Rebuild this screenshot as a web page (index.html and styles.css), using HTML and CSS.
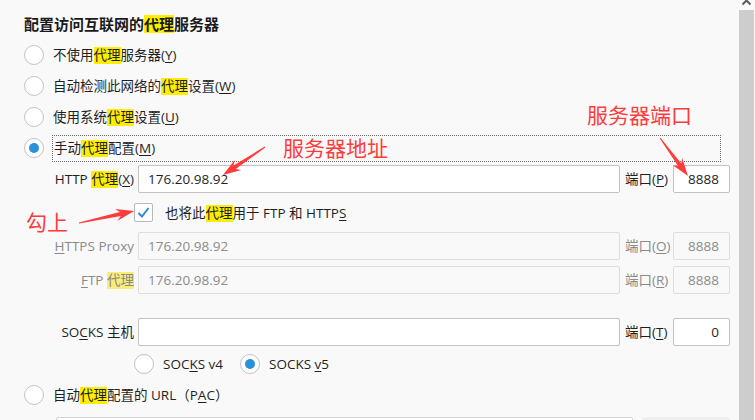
FILE: index.html
```html
<!DOCTYPE html>
<html lang="zh-CN">
<head>
<meta charset="utf-8">
<title>连接设置</title>
<link rel="stylesheet" href="styles.css">
</head>
<body>
<div class="window">
  <main class="panel">
    <h1 class="title">配置访问互联网的<span class="hl">代理</span>服务器</h1>

    <div class="opt"><span class="radio"></span><span class="opt-label">不使用<span class="hl">代理</span>服务器(<u>Y</u>)</span></div>
    <div class="opt"><span class="radio"></span><span class="opt-label">自动检测此网络的<span class="hl">代理</span>设置(<u>W</u>)</span></div>
    <div class="opt"><span class="radio"></span><span class="opt-label">使用系统<span class="hl">代理</span>设置(<u>U</u>)</span></div>
    <div class="opt opt-tall"><span class="radio checked"></span><span class="opt-label focus">手动<span class="hl">代理</span>配置(<u>M</u>)</span></div>

    <div class="field-row first">
      <span class="f-label">HTTP <span class="hl">代理</span>(<u>X</u>)</span>
      <span class="input">176.20.98.92</span>
      <span class="p-label">端口(<u>P</u>)</span>
      <span class="input port">8888</span>
    </div>

    <div class="check-row">
      <span class="checkbox"><svg width="17" height="17" viewBox="0 0 17 17"><polyline points="3.5,9 7,12.5 13.5,4" fill="none" stroke="#2b8ad6" stroke-width="2"/></svg></span>
      <span class="check-label">也将此<span class="hl">代理</span>用于 FTP 和 HTTP<u>S</u></span>
    </div>

    <div class="field-row disabled">
      <span class="f-label"><u>H</u>TTPS Proxy</span>
      <span class="input">176.20.98.92</span>
      <span class="p-label">端口(<u>O</u>)</span>
      <span class="input port">8888</span>
    </div>

    <div class="field-row disabled ftp">
      <span class="f-label"><u>F</u>TP <span class="hl">代理</span></span>
      <span class="input">176.20.98.92</span>
      <span class="p-label">端口(<u>R</u>)</span>
      <span class="input port">8888</span>
    </div>

    <div class="field-row socks">
      <span class="f-label">SO<u>C</u>KS 主机</span>
      <span class="input"></span>
      <span class="p-label">端口(<u>T</u>)</span>
      <span class="input port">0</span>
    </div>

    <div class="socks-row">
      <span class="sopt v4"><span class="radio"></span><span class="sopt-label">SOC<u>K</u>S v4</span></span>
      <span class="sopt"><span class="radio checked"></span><span class="sopt-label">SOCKS <u>v</u>5</span></span>
    </div>

    <div class="opt opt-pac"><span class="radio"></span><span class="opt-label">自动<span class="hl">代理</span>配置的 URL（P<u>A</u>C）</span></div>

    <div class="pac-row">
      <span class="input pac-input"></span>
      <span class="pac-btn"></span>
    </div>
  </main>

  <div class="scrollbar">
    <div class="sb-arrow"><svg width="16" height="10" viewBox="0 0 16 10"><polyline points="3.5,6.5 7.5,2.5 11.5,6.5" fill="none" stroke="#5a5a5a" stroke-width="2"/></svg></div>
    <div class="sb-thumb"></div>
  </div>

  <svg class="annot" width="755" height="420" viewBox="0 0 755 420">
    <polygon fill="#ff3b3b" points="265.3,147.4 235.7,169.0 241.3,170.0 223,175 234.7,160.0 233.5,165.6 264.7,146.6"/>
    <polygon fill="#ff3b3b" points="659.6,138.3 678.1,165.9 672.5,165.1 688,176 682.1,157.9 681.3,163.5 660.4,137.7"/>
    <polygon fill="#ff3b3b" points="79.1,223.5 120.7,216.0 117.7,220.7 134,211 115.1,208.9 119.9,212.0 78.9,222.5"/>
  </svg>
  <div class="note note-port">服务器端口</div>
  <div class="note note-addr">服务器地址</div>
  <div class="note note-check">勾上</div>
</div>
</body>
</html>
```
FILE: styles.css
```css
* { box-sizing: border-box; }

html, body {
  margin: 0;
  padding: 0;
  background: #f9f9f9;
}

body {
  font-family: "Open Sans", "Noto Sans CJK SC", sans-serif;
  font-size: 13.5px;
  color: #1f1f1f;
}

.window {
  position: relative;
  width: 755px;
  height: 420px;
  overflow: hidden;
  display: flex;
  background: #f9f9f9;
}

.panel {
  flex: 1;
  padding: 0 9px 0 24px;
  display: flex;
  flex-direction: column;
}

u {
  text-decoration: underline;
  text-underline-offset: 2px;
}

.hl {
  display: inline-block;
  background: #ffee00;
  line-height: 17px;
}

.title {
  margin: 15px 0 6px;
  font-size: 15px;
  font-weight: bold;
  line-height: 18px;
  color: #1a1a1a;
  font-family: "Noto Sans CJK SC", sans-serif;
}

.title .hl { line-height: 18px; }

.opt {
  height: 31px;
  display: flex;
  align-items: center;
  flex-shrink: 0;
}

.opt-tall { height: 32px; }

.opt-pac { height: 26px; }

.radio {
  width: 20px;
  height: 20px;
  border-radius: 50%;
  border: 1.5px solid #c3c3c3;
  background: #fff;
  flex-shrink: 0;
  margin-right: 9px;
  display: flex;
  align-items: center;
  justify-content: center;
}

.radio.checked::after {
  content: "";
  width: 10px;
  height: 10px;
  border-radius: 50%;
  background: #2a90d8;
}

.opt-label {
  line-height: 20px;
  white-space: nowrap;
}

.opt-label.focus {
  flex: 1;
  height: 27px;
  margin: 0 9px 0 -1px;
  padding: 0 1px;
  border: 1px dotted #6a6a6a;
  display: flex;
  align-items: center;
}

.field-row {
  display: grid;
  grid-template-columns: 114px 1fr 53px 57px;
  align-items: center;
  height: 28px;
  flex-shrink: 0;
}

.field-row.first { margin-top: 1px; }
.field-row.ftp { margin-top: 6px; }
.field-row.socks { margin-top: 24px; }

.f-label {
  text-align: right;
  padding-right: 4px;
  white-space: nowrap;
  line-height: 20px;
}

.p-label {
  padding-left: 5px;
  white-space: nowrap;
  line-height: 20px;
}

.input {
  height: 28px;
  border: 1px solid #c2c2c2;
  border-radius: 2px;
  background: #fff;
  padding: 0 9px;
  line-height: 26px;
  white-space: nowrap;
  overflow: hidden;
}

.input.port {
  text-align: right;
  padding-right: 10px;
}

.disabled {
  color: #8a8a8a;
}

.disabled .input {
  background: #f9f9f9;
  border-color: #dedede;
  color: #8c8c8c;
}

.disabled .hl {
  background: #f9ec78;
}

.check-row {
  height: 39px;
  display: flex;
  align-items: center;
  padding-left: 110px;
  flex-shrink: 0;
}

.checkbox {
  width: 19px;
  height: 19px;
  border: 1px solid #b9b9b9;
  border-radius: 2px;
  background: #fff;
  margin-right: 12px;
  display: flex;
  align-items: center;
  justify-content: center;
}

.check-label {
  line-height: 20px;
  white-space: nowrap;
}

.socks-row {
  height: 36px;
  display: flex;
  align-items: center;
  padding-left: 110px;
  flex-shrink: 0;
}

.sopt {
  display: flex;
  align-items: center;
}

.sopt.v4 { width: 106px; }

.sopt-label {
  line-height: 20px;
  white-space: nowrap;
}

.pac-row {
  margin-top: 9px;
  display: flex;
  gap: 9px;
  padding-left: 32px;
  flex-shrink: 0;
}

.pac-input {
  flex: 1;
  border-color: #d4d4d4;
}

.pac-btn {
  width: 88px;
  height: 28px;
  background: #efefef;
  border-radius: 3px;
}

.scrollbar {
  width: 16px;
  flex-shrink: 0;
  display: flex;
  flex-direction: column;
  background: #f9f9f9;
}

.sb-arrow {
  height: 10px;
  overflow: hidden;
}

.sb-arrow svg {
  display: block;
  margin-top: -2px;
}

.sb-thumb {
  flex: 1;
  width: 15px;
  background: #cdcdcd;
}

.annot {
  position: absolute;
  left: 0;
  top: 0;
  pointer-events: none;
}

.note {
  position: absolute;
  font-family: "Noto Sans CJK SC", sans-serif;
  font-size: 21px;
  line-height: 21px;
  color: #ff3b3b;
  white-space: nowrap;
}

.note-port { left: 587px; top: 104px; }
.note-addr { left: 283px; top: 137px; }
.note-check { left: 26px; top: 211px; }
```
